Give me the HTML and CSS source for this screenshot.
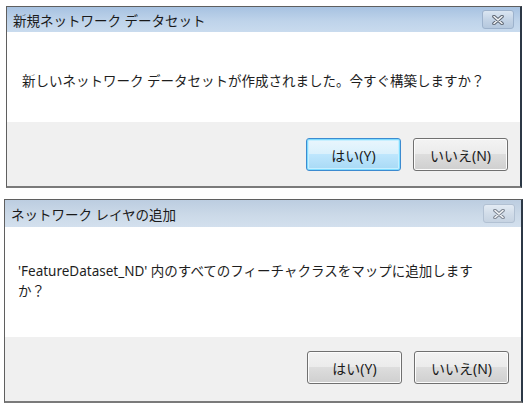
FILE: index.html
```html
<!DOCTYPE html>
<html lang="ja">
<head>
    <meta charset="UTF-8">
    <title>ネットワーク データセット</title>
    <link rel="stylesheet" href="styles.css">
</head>
<body>
    <div class="dialog dialog-build">
        <div class="titlebar">
            <span class="title">新規ネットワーク データセット</span>
            <span class="close-button">
                <svg width="14" height="10" viewBox="0 0 14 10">
                    <path d="M3 1.5 L11 8.5 M11 1.5 L3 8.5" stroke="#5d6673" stroke-width="3.6" stroke-linecap="round" fill="none"/>
                    <path d="M3 1.5 L11 8.5 M11 1.5 L3 8.5" stroke="#f4f6f8" stroke-width="1.6" stroke-linecap="round" fill="none"/>
                </svg>
            </span>
        </div>
        <div class="message">新しいネットワーク データセットが作成されました。今すぐ構築しますか？</div>
        <div class="footer">
            <button class="button default">はい(Y)</button>
            <button class="button">いいえ(N)</button>
        </div>
    </div>

    <div class="dialog dialog-add">
        <div class="titlebar">
            <span class="title">ネットワーク レイヤの追加</span>
            <span class="close-button">
                <svg width="14" height="10" viewBox="0 0 14 10">
                    <path d="M3 1.5 L11 8.5 M11 1.5 L3 8.5" stroke="#7b8390" stroke-width="3.6" stroke-linecap="round" fill="none"/>
                    <path d="M3 1.5 L11 8.5 M11 1.5 L3 8.5" stroke="#f4f6f8" stroke-width="1.6" stroke-linecap="round" fill="none"/>
                </svg>
            </span>
        </div>
        <div class="message">'FeatureDataset_ND' 内のすべてのフィーチャクラスをマップに追加します<br>か？</div>
        <div class="footer">
            <button class="button">はい(Y)</button>
            <button class="button">いいえ(N)</button>
        </div>
    </div>
</body>
</html>
```

FILE: styles.css
```css
body {
    margin: 0;
    padding-top: 6px;
    background-color: #fff;
    color: #1e1e1e;
    font-family: 'Noto Sans', 'Noto Sans CJK JP', sans-serif;
    font-size: 13.5px;
}

.dialog {
    border: 1px solid #5f5f5f;
    border-right: 2px solid #2c3846;
    border-bottom: 2px solid #7a7a7a;
    background-color: #fff;
}

.dialog-build {
    margin-left: 6px;
    width: 513px;
}

.dialog-add {
    margin-left: 4px;
    margin-top: 11px;
    width: 516px;
}

.titlebar {
    display: flex;
    align-items: center;
    justify-content: space-between;
    height: 25px;
    padding: 0 6px 0 6px;
    background: linear-gradient(#a7c2e1, #bed3ea 55%, #c9dbee);
}

.dialog-add .titlebar {
    height: 27px;
    background: linear-gradient(#bccde0, #cbd9e8 55%, #d3e0ee);
}

.title {
    font-size: 13.5px;
    color: #1a1a1a;
}

.close-button {
    display: flex;
    align-items: center;
    justify-content: center;
    width: 30px;
    height: 17px;
    border: 1px solid #9db2cc;
    border-radius: 3px;
    background: linear-gradient(#dbe6f2, #c4d4e6 50%, #b5c8de);
}

.dialog-add .close-button {
    border-color: #b2c1d3;
    background: linear-gradient(#e3ebf4, #d2dde9 50%, #c6d3e2);
}

.message {
    line-height: 20px;
    padding: 39px 10px 0 15px;
    height: 51px;
}

.dialog-add .message {
    padding: 34px 10px 0 13px;
    height: 76px;
}

.footer {
    display: flex;
    justify-content: flex-end;
    gap: 12px;
    padding: 16px 12px 0 0;
    height: 48px;
    background-color: #f0f0f0;
}

.dialog-add .footer {
    padding-top: 14px;
    height: 50px;
}

.button {
    width: 95px;
    height: 33px;
    font-family: inherit;
    font-size: 14px;
    color: #1a1a1a;
    border: 1px solid #707070;
    border-radius: 3px;
    background: linear-gradient(#f3f3f3, #ebebeb 49%, #dddddd 50%, #cfcfcf);
    box-shadow: inset 0 0 0 1px #fcfcfc;
    padding: 0;
}

.default {
    border-color: #3c8bd0;
    background: linear-gradient(#eaf6fd, #d9f0fc 49%, #bee6fd 50%, #a7d9f5);
    box-shadow: inset 0 0 0 1px #7fdcff, inset 0 0 0 2px #c7efff;
}
```
